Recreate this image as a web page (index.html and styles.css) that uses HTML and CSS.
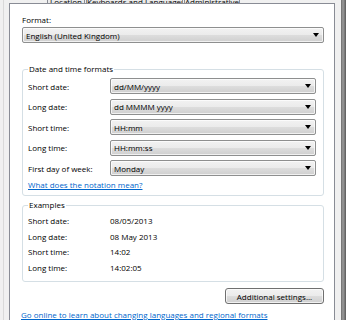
FILE: index.html
```html
<!DOCTYPE html>
<html lang="en">
<head>
    <meta charset="UTF-8">
    <title>Region - Formats</title>
    <link rel="stylesheet" href="styles.css">
</head>
<body>
    <div class="window">
        <div class="edge-left"></div>

        <div class="sheet">
            <div class="tabs">
                <div class="tab tab-first">Location</div>
                <div class="tab tab-mid">Keyboards and Languages</div>
                <div class="tab tab-last">Administrative</div>
            </div>

            <div class="panel">
                <div class="field-label">Format:</div>
                <div class="combo combo-wide">
                    <span>English (United Kingdom)</span>
                    <span class="arrow"></span>
                </div>

                <div class="group group-formats">
                    <div class="group-title">Date and time formats</div>
                    <div class="rows">
                        <div class="row">
                            <span class="row-label">Short date:</span>
                            <div class="combo"><span>dd/MM/yyyy</span><span class="arrow"></span></div>
                        </div>
                        <div class="row">
                            <span class="row-label">Long date:</span>
                            <div class="combo"><span>dd MMMM yyyy</span><span class="arrow"></span></div>
                        </div>
                        <div class="row">
                            <span class="row-label">Short time:</span>
                            <div class="combo"><span>HH:mm</span><span class="arrow"></span></div>
                        </div>
                        <div class="row">
                            <span class="row-label">Long time:</span>
                            <div class="combo"><span>HH:mm:ss</span><span class="arrow"></span></div>
                        </div>
                        <div class="row">
                            <span class="row-label">First day of week:</span>
                            <div class="combo"><span>Monday</span><span class="arrow"></span></div>
                        </div>
                    </div>
                    <a class="link notation-link" href="#">What does the notation mean?</a>
                </div>

                <div class="group group-examples">
                    <div class="group-title">Examples</div>
                    <div class="example"><span class="row-label">Short date:</span><span>08/05/2013</span></div>
                    <div class="example"><span class="row-label">Long date:</span><span>08 May 2013</span></div>
                    <div class="example"><span class="row-label">Short time:</span><span>14:02</span></div>
                    <div class="example"><span class="row-label">Long time:</span><span>14:02:05</span></div>
                </div>

                <div class="actions">
                    <button class="btn">Additional settings...</button>
                </div>

                <a class="link online-link" href="#">Go online to learn about changing languages and regional formats</a>
            </div>
        </div>

        <div class="edge-right">
            <div class="scroll-strip"></div>
        </div>
    </div>
</body>
</html>
```

FILE: styles.css
```css
* {
    margin: 0;
    padding: 0;
    box-sizing: border-box;
}

body {
    font-family: "Segoe UI", "Open Sans", sans-serif;
    font-size: 8px;
    color: #000;
    background: #f0f0f0;
    width: 346px;
    height: 320px;
    overflow: hidden;
}

.window {
    display: flex;
    height: 320px;
}

.edge-left {
    width: 9px;
    border-left: 3px solid #f0f0f0;
    background: linear-gradient(90deg, #d9d9d9 0, #d9d9d9 1px, #f0f0f0 1px);
}

.sheet {
    width: 326px;
    display: flex;
    flex-direction: column;
}

/* only the bottom edge of the tab strip is in view */
.tabs {
    height: 5px;
    display: flex;
    align-items: flex-end;
    overflow: hidden;
    padding-left: 38px;
}

.tab {
    flex: none;
    height: 14px;
    line-height: 14px;
    text-align: center;
    overflow: hidden;
    background: linear-gradient(#f2f2f2, #e3e3e3);
    border: 1px solid #898c95;
    border-bottom: none;
    white-space: nowrap;
    position: relative;
    top: 5px;
}

.tab + .tab {
    margin-left: 1px;
}

.tab-first {
    width: 38px;
}

.tab-mid {
    width: 97px;
}

.tab-last {
    width: 56px;
}

.panel {
    flex: 1;
    background: #fff;
    border: 1px solid #898c95;
    border-bottom: none;
    padding: 9px 10px 0 12px;
}

.field-label {
    height: 13px;
    line-height: 13px;
}

.combo {
    height: 16px;
    display: flex;
    align-items: center;
    justify-content: space-between;
    padding: 0 4px 0 3px;
    border: 1px solid #8e8f8f;
    border-radius: 2px;
    background: linear-gradient(#f2f2f2 0%, #ebebeb 50%, #dddddd 51%, #cfcfcf 100%);
    box-shadow: inset 0 0 0 1px rgba(255, 255, 255, 0.7);
    white-space: nowrap;
}

.combo-wide {
    margin-top: 1px;
    width: 302px;
}

.arrow {
    width: 0;
    height: 0;
    border-left: 3.5px solid transparent;
    border-right: 3.5px solid transparent;
    border-top: 4px solid #000;
}

.group {
    border: 1px solid #d5dfe5;
    border-radius: 3px;
    width: 302px;
    padding: 0 6px 0 5px;
}

.group-title {
    display: block;
    width: fit-content;
    background: #fff;
    padding: 0 1px;
    height: 12px;
    line-height: 12px;
    margin-top: -7px;
}

.group-formats {
    margin-top: 26px;
    height: 127px;
}

.rows {
    display: flex;
    flex-direction: column;
    gap: 4.5px;
    margin-top: 3px;
}

.row {
    display: flex;
    align-items: center;
}

.row-label {
    width: 82px;
    flex-shrink: 0;
}

.row .combo {
    width: 206px;
}

.link {
    color: #0066cc;
    text-decoration: underline;
    display: block;
}

.notation-link {
    margin-top: 2px;
    height: 14px;
    line-height: 14px;
}

.group-examples {
    margin-top: 9px;
    height: 77px;
}

.group-examples .group-title {
    margin-bottom: 2px;
}

.example {
    display: flex;
    height: 15.7px;
    line-height: 15.7px;
}

.actions {
    display: flex;
    justify-content: flex-end;
    margin-top: 6px;
    width: 302px;
}

.btn {
    font-family: inherit;
    font-size: inherit;
    color: #000;
    width: 99px;
    height: 16px;
    border: 1px solid #707070;
    border-radius: 3px;
    background: linear-gradient(#f2f2f2 0%, #ebebeb 50%, #dddddd 51%, #cfcfcf 100%);
    box-shadow: inset 0 0 0 1px rgba(255, 255, 255, 0.7);
}

.online-link {
    margin-top: 5px;
    margin-left: -1px;
    white-space: nowrap;
}

.edge-right {
    flex: 1;
    display: flex;
    justify-content: flex-end;
    padding-left: 6px;
}

.scroll-strip {
    width: 5px;
    background: linear-gradient(90deg, #6b6b6b, #9c9c9c 40%, #5a5a5a);
}
```
